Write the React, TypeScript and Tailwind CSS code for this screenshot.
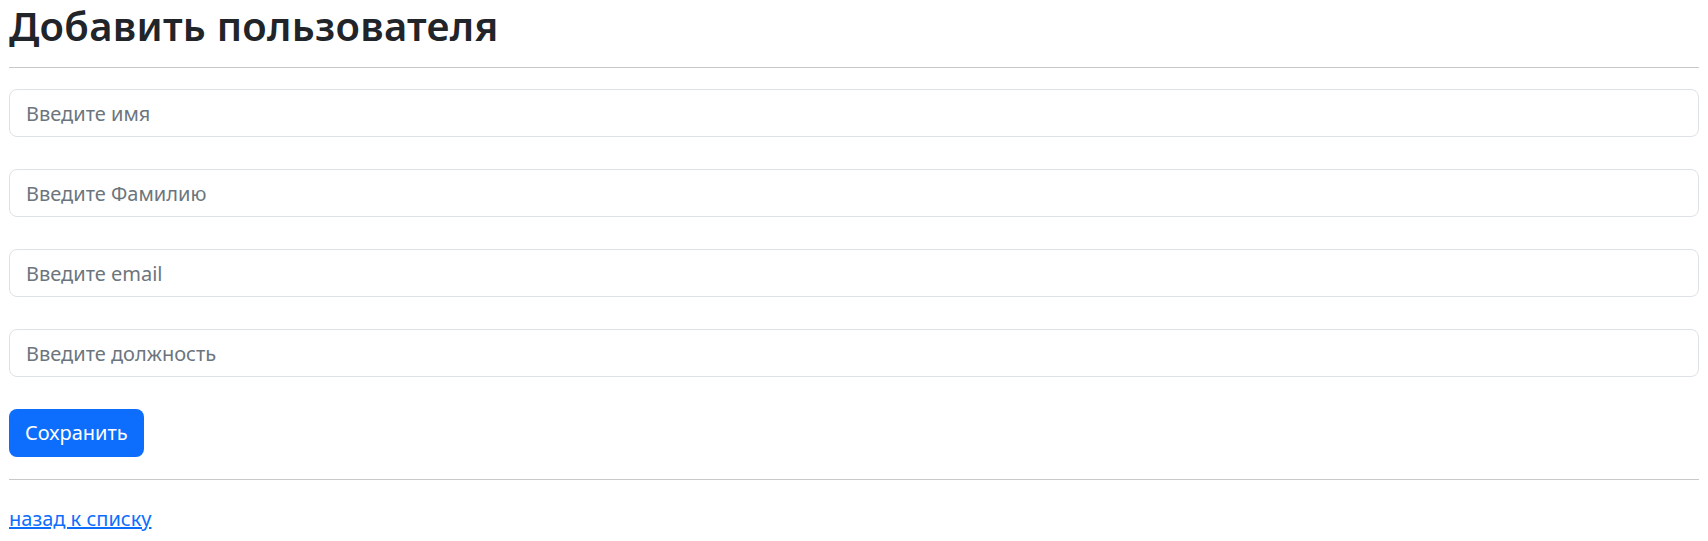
const fields = [
  "Введите имя",
  "Введите Фамилию",
  "Введите email",
  "Введите должность",
];

export default function App() {
  return (
    <div
      className="min-h-[541px] bg-white px-[9px] pt-[2px] text-[#212529]"
      style={{ fontFamily: '"Noto Sans", "Open Sans", sans-serif' }}
    >
      <h1 className="text-[40px] leading-[48px] font-semibold tracking-[0.3px]">Добавить пользователя</h1>
      <hr className="mt-[17px] border-0 border-t border-[#c8c9ca]" />

      <form className="mt-[21px] flex flex-col gap-[32px]" onSubmit={(e) => e.preventDefault()}>
        {fields.map((placeholder) => (
          <input
            key={placeholder}
            type="text"
            placeholder={placeholder}
            className="h-[48px] w-full rounded-[8px] border border-[#dee2e6] bg-white px-4 text-[20px] text-[#212529] outline-none placeholder:text-[#6c757d]"
          />
        ))}
        <div>
          <button
            type="submit"
            className="h-[48px] rounded-[8px] bg-[#0d6efd] px-4 text-[20px] text-white"
          >
            Сохранить
          </button>
        </div>
      </form>

      <hr className="mt-[22px] border-0 border-t border-[#c8c9ca]" />
      <div className="mt-[24px]">
        <a href="#" className="text-[20px] leading-[30px] text-[#0d6efd] underline">
          назад к списку
        </a>
      </div>
    </div>
  );
}
